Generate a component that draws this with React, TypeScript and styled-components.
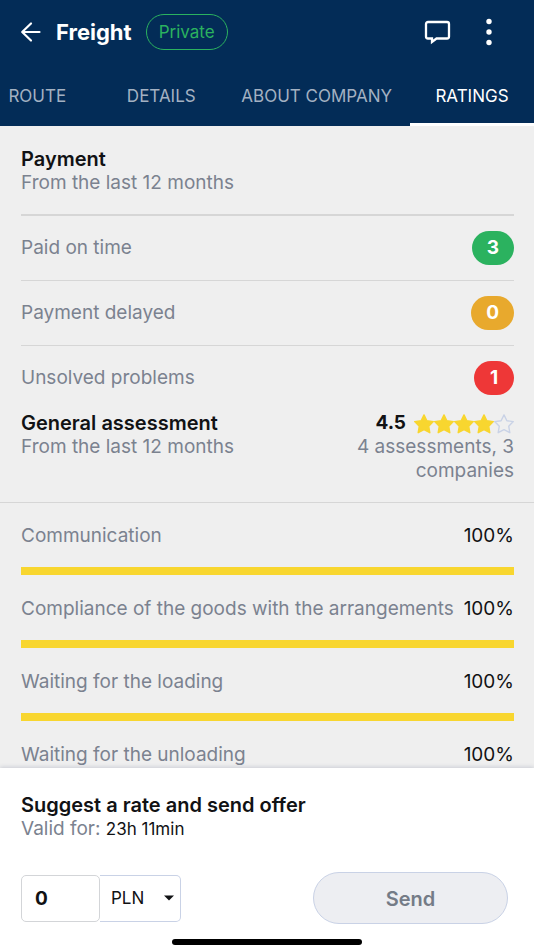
import React, { useState } from "react";
import styled, { createGlobalStyle } from "styled-components";

const color = {
  navy: "#032c57",
  page: "#efefef",
  text: "#111214",
  muted: "#7b828f",
  line: "#d6d6d6",
  yellow: "#f8d62f",
  green: "#2bb25f",
  orange: "#e8a92d",
  red: "#ee3737",
  frost: "#c9d2e6",
};

const GlobalStyle = createGlobalStyle`
  *, *::before, *::after { box-sizing: border-box; }
  body {
    margin: 0;
    background: ${color.page};
    color: ${color.text};
    font-family: Inter, "Liberation Sans", sans-serif;
    font-size: 19px;
    line-height: 24px;
  }
  h1, h2, p, ul { margin: 0; padding: 0; }
  button, input, select { font: inherit; color: inherit; }
`;

const Screen = styled.div`
  display: flex;
  flex-direction: column;
  height: 100vh;
  overflow: hidden;
`;

const Header = styled.header`
  flex: none;
  background: ${color.navy};
  color: #fff;
`;

const TopBar = styled.div`
  display: flex;
  align-items: center;
  height: 66px;
  padding: 0 32px 3px 20px;
`;

const IconButton = styled.button`
  display: flex;
  padding: 0;
  border: 0;
  background: none;
  color: #fff;
  cursor: pointer;
`;

const ScreenTitle = styled.h1`
  margin: 0 14px;
  font-size: 22px;
  font-weight: 700;
`;

const Tag = styled.span`
  padding: 5px 12px;
  border: 1px solid ${color.green};
  border-radius: 18px;
  color: ${color.green};
  font-size: 17px;
`;

const Actions = styled.div`
  display: flex;
  align-items: center;
  gap: 24px;
  margin-left: auto;
`;

const Tabs = styled.nav`
  display: flex;
  justify-content: flex-end;
  height: 60px;
  overflow: hidden;
`;

const Tab = styled.button<{ $active: boolean }>`
  flex: none;
  min-width: 124px;
  padding: 3px 18px 0;
  border: 0;
  border-bottom: 3px solid ${(p) => (p.$active ? "#fff" : "transparent")};
  background: none;
  color: ${(p) => (p.$active ? "#fff" : "#a3b1c2")};
  font-size: 17px;
  cursor: pointer;
`;

const Content = styled.main`
  flex: 1;
  min-height: 0;
  overflow: hidden;
`;

const PaymentSection = styled.section`
  padding: 21px 20px 0 21px;
`;

const Heading = styled.h2`
  font-size: 20px;
  font-weight: 600;
  line-height: 24px;
`;

const Muted = styled.p`
  color: ${color.muted};
`;

const PaymentList = styled.ul`
  margin-top: 19px;
  border-top: 1px solid ${color.line};
  list-style: none;
`;

const PaymentRow = styled.li`
  display: flex;
  align-items: center;
  justify-content: space-between;
  height: 65px;
  border-top: 1px solid ${color.line};
  color: ${color.muted};
`;

const Badge = styled.span<{ $tone: string }>`
  min-width: 40px;
  padding: 5px 15px;
  border-radius: 17px;
  background: ${(p) => p.$tone};
  color: #fff;
  font-weight: 700;
  text-align: center;
`;

const Assessment = styled.section`
  display: flex;
  justify-content: space-between;
  padding: 1px 20px 19px 21px;
  border-bottom: 1px solid ${color.line};
`;

const Summary = styled.div`
  width: 160px;
  text-align: right;
`;

const Score = styled.div`
  display: flex;
  align-items: center;
  justify-content: flex-end;
  gap: 8px;
  font-weight: 700;
`;

const Stars = styled.span`
  display: flex;
  padding-top: 2px;
`;

const Ratings = styled.ul`
  padding: 21px 20px 0 21px;
  list-style: none;
`;

const Rating = styled.li`
  margin-bottom: 22px;
`;

const RatingLabel = styled.div`
  display: flex;
  justify-content: space-between;
  margin-bottom: 19px;
  color: ${color.muted};
  white-space: nowrap;
`;

const Percent = styled.span`
  color: ${color.text};
`;

const Track = styled.div`
  height: 8px;
  background: #dcdcdc;
`;

const Fill = styled.div`
  height: 100%;
  background: ${color.yellow};
`;

const Offer = styled.form`
  flex: none;
  padding: 25px 21px 5px;
  background: #fff;
  box-shadow: 0 -1px 4px rgba(60, 70, 110, 0.2);
  z-index: 1;
`;

const Remaining = styled.span`
  color: ${color.text};
  font-size: 17px;
`;

const OfferControls = styled.div`
  display: flex;
  align-items: center;
  justify-content: space-between;
  padding: 31px 5px 15px 0;
`;

const RateField = styled.div`
  display: flex;
`;

const RateInput = styled.input`
  width: 79px;
  height: 47px;
  padding: 0 13px;
  border: 1px solid #d3d5d8;
  border-radius: 5px;
  background: #fff;
  font-weight: 700;
`;

const CurrencyBox = styled.div`
  display: grid;
  align-items: center;
  width: 81px;
  > * {
    grid-area: 1 / 1;
  }
  > svg {
    justify-self: end;
    margin-right: 7px;
    pointer-events: none;
  }
`;

const Currency = styled.select`
  width: 100%;
  height: 47px;
  padding: 0 11px;
  border: 1px solid ${color.frost};
  border-left: 0;
  border-radius: 0 5px 5px 0;
  background: #fff;
  font-size: 17px;
  appearance: none;
`;

const SendButton = styled.button`
  width: 195px;
  height: 52px;
  padding: 2px 0 0;
  border: 1px solid ${color.frost};
  border-radius: 26px;
  background: #edeef2;
  color: #747b87;
  font-size: 20px;
  font-weight: 600;
`;

const HomeIndicator = styled.div`
  width: 190px;
  height: 6px;
  margin: 0 auto;
  border-radius: 3px;
  background: #000;
`;

const BackIcon = () => (
  <svg width="22" height="22" viewBox="0 0 22 22" fill="none" stroke="currentColor" strokeWidth="2.2" strokeLinecap="round" strokeLinejoin="round" aria-hidden="true">
    <path d="M19.500 11H2.500M11 2.500L2.200 11l8.800 8.500" />
  </svg>
);

const ChatIcon = () => (
  <svg width="28" height="26" viewBox="0 0 28 26" fill="none" aria-hidden="true">
    <path
      d="M4 3h19a2 2 0 0 1 2 2v12.500a2 2 0 0 1-2 2H12.500L8 23V19.500H4a2 2 0 0 1-2-2V5a2 2 0 0 1 2-2z"
      stroke="currentColor"
      strokeWidth="2.300"
    />
  </svg>
);

const MoreIcon = () => (
  <svg width="26" height="28" viewBox="0 0 26 28" fill="currentColor" aria-hidden="true">
    <circle cx="13" cy="3.500" r="2.700" />
    <circle cx="13" cy="14" r="2.700" />
    <circle cx="13" cy="24.500" r="2.700" />
  </svg>
);

const Star = ({ filled }: { filled: boolean }) => (
  <svg width="20" height="20" viewBox="0 0 20 20" aria-hidden="true">
    <path
      d="M10 .9l2.900 5.800 6.400.9-4.600 4.600 1.100 6.500L10 15.700l-5.800 3 1.100-6.500L.7 7.600l6.400-.9z"
      fill={filled ? color.yellow : "none"}
      stroke={filled ? color.yellow : color.frost}
      strokeWidth="1.400"
      strokeLinejoin="round"
    />
  </svg>
);

const tabs = ["ROUTE", "DETAILS", "ABOUT COMPANY", "RATINGS"];

const payments = [
  { label: "Paid on time", count: 3, tone: color.green },
  { label: "Payment delayed", count: 0, tone: color.orange },
  { label: "Unsolved problems", count: 1, tone: color.red },
];

const ratings = [
  { label: "Communication", value: 100 },
  { label: "Compliance of the goods with the arrangements", value: 100 },
  { label: "Waiting for the loading", value: 100 },
  { label: "Waiting for the unloading", value: 100 },
];

export default function App() {
  const [active, setActive] = useState("RATINGS");
  const [rate, setRate] = useState("0");

  return (
    <>
      <GlobalStyle />
      <Screen>
        <Header>
          <TopBar>
            <IconButton type="button" aria-label="Back">
              <BackIcon />
            </IconButton>
            <ScreenTitle>Freight</ScreenTitle>
            <Tag>Private</Tag>
            <Actions>
              <IconButton type="button" aria-label="Messages">
                <ChatIcon />
              </IconButton>
              <IconButton type="button" aria-label="More options">
                <MoreIcon />
              </IconButton>
            </Actions>
          </TopBar>
          <Tabs>
            {tabs.map((tab) => (
              <Tab key={tab} type="button" $active={tab === active} onClick={() => setActive(tab)}>
                {tab}
              </Tab>
            ))}
          </Tabs>
        </Header>

        <Content>
          <PaymentSection>
            <Heading>Payment</Heading>
            <Muted>From the last 12 months</Muted>
            <PaymentList>
              {payments.map((item) => (
                <PaymentRow key={item.label}>
                  {item.label}
                  <Badge $tone={item.tone}>{item.count}</Badge>
                </PaymentRow>
              ))}
            </PaymentList>
          </PaymentSection>

          <Assessment>
            <div>
              <Heading>General assessment</Heading>
              <Muted>From the last 12 months</Muted>
            </div>
            <Summary>
              <Score>
                4.5
                <Stars role="img" aria-label="4 of 5 stars">
                  {[1, 2, 3, 4, 5].map((n) => (
                    <Star key={n} filled={n <= 4} />
                  ))}
                </Stars>
              </Score>
              <Muted>4 assessments, 3 companies</Muted>
            </Summary>
          </Assessment>

          <Ratings>
            {ratings.map((item) => (
              <Rating key={item.label}>
                <RatingLabel>
                  {item.label}
                  <Percent>{item.value}%</Percent>
                </RatingLabel>
                <Track>
                  <Fill style={{ width: `${item.value}%` }} />
                </Track>
              </Rating>
            ))}
          </Ratings>
        </Content>

        <Offer onSubmit={(e) => e.preventDefault()}>
          <Heading>Suggest a rate and send offer</Heading>
          <Muted>
            Valid for: <Remaining>23h 11min</Remaining>
          </Muted>
          <OfferControls>
            <RateField>
              <RateInput
                aria-label="Rate"
                inputMode="decimal"
                value={rate}
                onChange={(e) => setRate(e.target.value)}
              />
              <CurrencyBox>
                <Currency aria-label="Currency" defaultValue="PLN">
                  <option>PLN</option>
                  <option>EUR</option>
                </Currency>
                <svg width="10" height="6" viewBox="0 0 10 6" aria-hidden="true">
                  <path d="M0 .5h10L5 5.500z" fill={color.text} />
                </svg>
              </CurrencyBox>
            </RateField>
            <SendButton type="submit">Send</SendButton>
          </OfferControls>
          <HomeIndicator />
        </Offer>
      </Screen>
    </>
  );
}
